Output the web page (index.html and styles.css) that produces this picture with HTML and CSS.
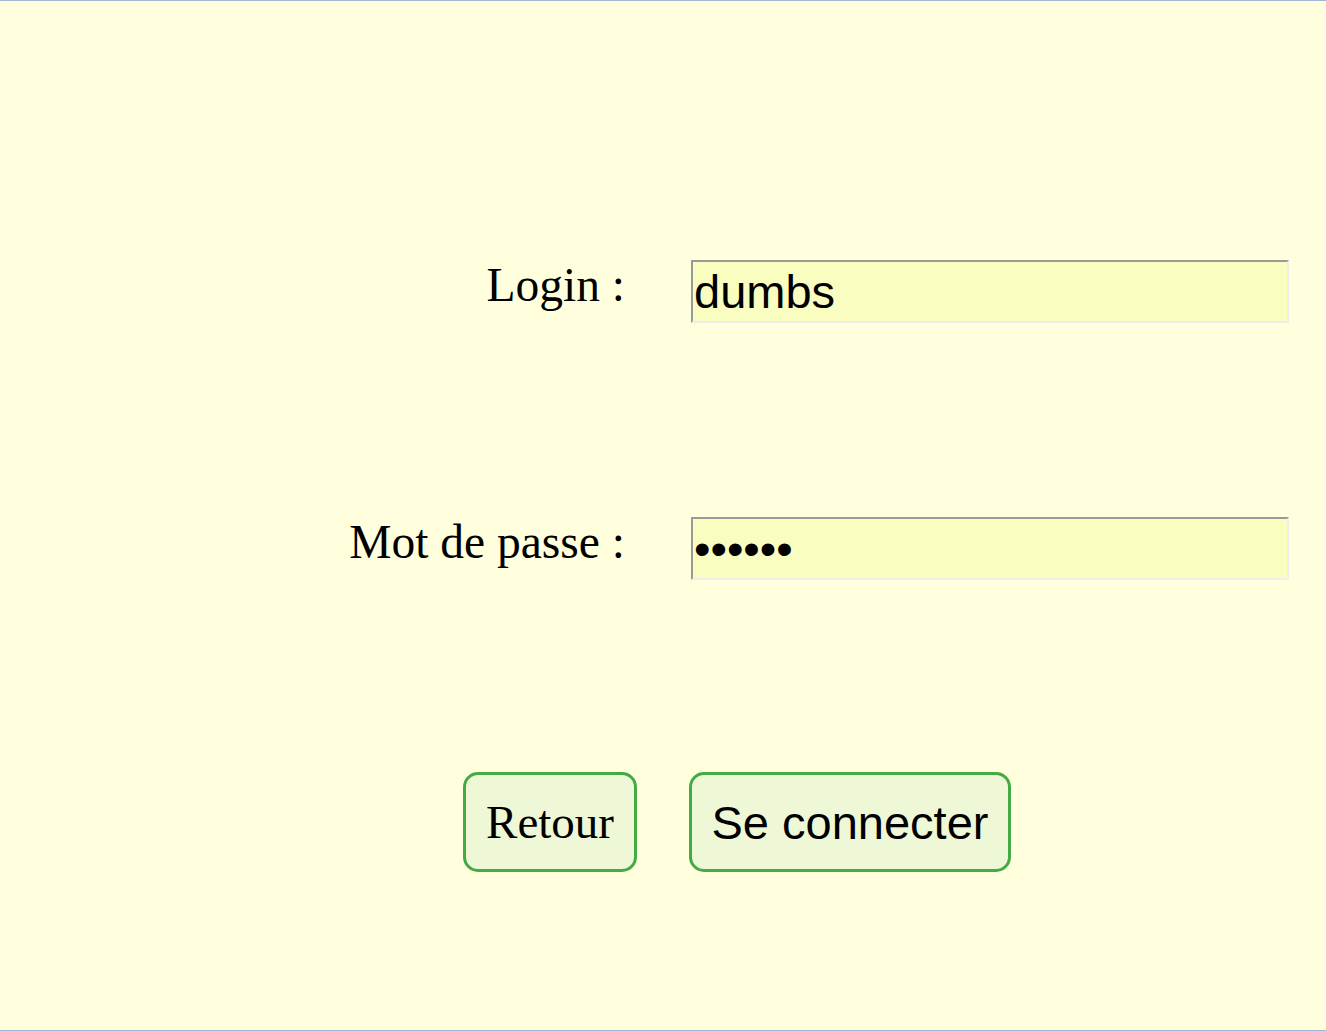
FILE: index.html
```html
<!DOCTYPE html>
<html lang="fr">
<head>
<meta charset="utf-8">
<title>Connexion</title>
<link rel="stylesheet" href="styles.css">
</head>
<body>
<main class="page">
  <form class="login-form">
    <div class="fields">
      <label class="label" for="login">Login :</label>
      <input class="field" id="login" type="text" value="dumbs">
      <label class="label" for="pass">Mot de passe :</label>
      <input class="field" id="pass" type="password" value="secret">
    </div>
    <div class="actions">
      <button type="button" class="btn btn-back">Retour</button>
      <button type="submit" class="btn btn-submit">Se connecter</button>
    </div>
  </form>
</main>
</body>
</html>
```
FILE: styles.css
```css
html, body {
  margin: 0;
  padding: 0;
}
body {
  background: #ffffdd;
  font-family: "Liberation Serif", serif;
}
.page {
  box-sizing: border-box;
  height: 1031px;
  border-top: 1px solid #a3b6d3;
  border-bottom: 1px solid #a3b6d3;
  padding-top: 259px;
}
.fields {
  display: grid;
  grid-template-columns: 625px 598px;
  column-gap: 66px;
  row-gap: 194px;
  align-items: start;
}
.label {
  text-align: right;
  font-size: 47.5px;
  line-height: 52px;
  margin-top: -1px;
  color: #000;
}
.field {
  box-sizing: border-box;
  height: 63px;
  width: 598px;
  margin: 0;
  padding: 0 1px;
  background: #fafdc0;
  border: 2px solid;
  border-color: #9a9a9a #eeeeee #eeeeee #9a9a9a;
  font-family: "Liberation Sans", sans-serif;
  font-size: 47px;
  color: #000;
  outline: none;
}
.actions {
  display: flex;
  gap: 52px;
  margin-top: 192px;
  padding-left: 463px;
}
.btn {
  box-sizing: border-box;
  height: 100px;
  margin: 0;
  padding: 0;
  background: #eff8d6;
  border: 3px solid #44aa44;
  border-radius: 15px;
  color: #000;
  font-size: 47px;
}
.btn-back {
  width: 174px;
  font-family: "Liberation Serif", serif;
}
.btn-submit {
  width: 322px;
  font-family: "Liberation Sans", sans-serif;
}
```
